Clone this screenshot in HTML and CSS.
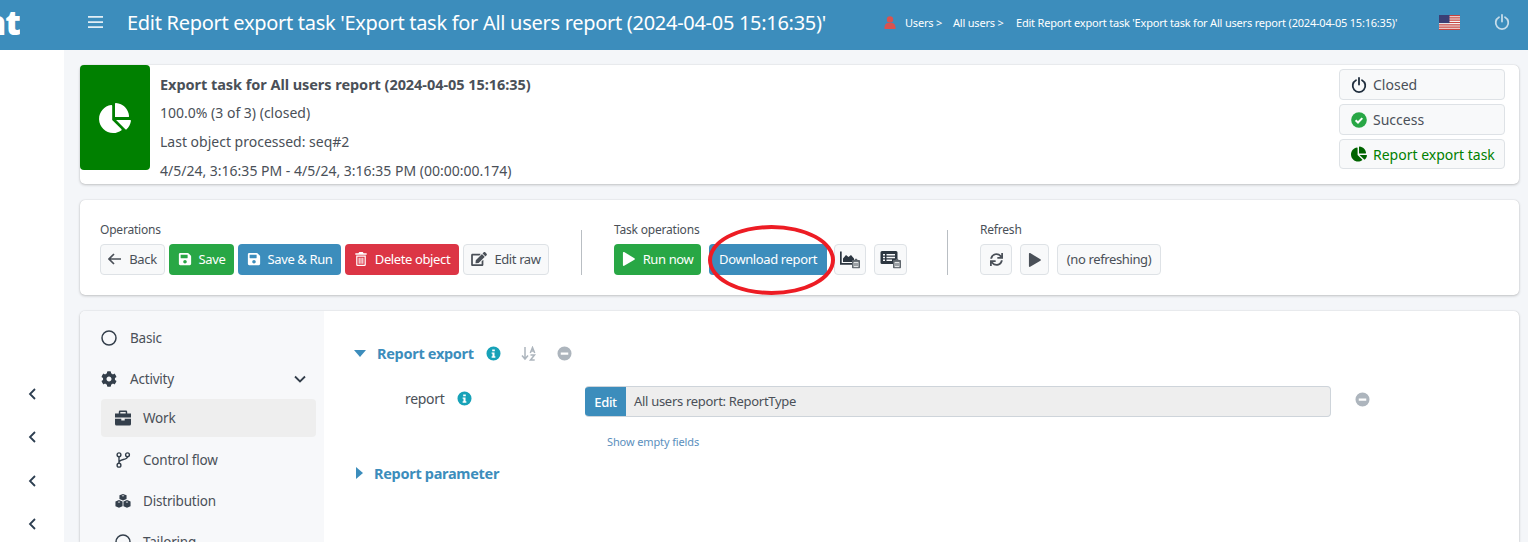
FILE: index.html
```html
<!DOCTYPE html>
<html lang="en">
<head>
<meta charset="utf-8">
<title>Edit Report export task</title>
<link rel="stylesheet" href="styles.css">
</head>
<body>
<svg class="defs" width="0" height="0" aria-hidden="true">
  <symbol id="pie" viewBox="0 0 544 512"><path d="M527.79 288H290.5l158.03 158.03c6.04 6.04 15.98 6.53 22.19.68 38.7-36.46 65.32-85.61 73.13-140.86 1.34-9.46-6.51-17.85-16.06-17.85zm-15.83-64.8C503.72 103.74 408.26 8.28 288.8.04 279.68-.59 272 7.1 272 16.24V240h223.77c9.14 0 16.82-7.68 16.19-16.8zM224 288V50.71c0-9.55-8.39-17.4-17.84-16.06C86.99 51.49-4.1 155.6.14 280.37 4.5 408.51 114.83 513.59 243.03 511.98c50.4-.63 96.97-16.87 135.26-44.03 7.9-5.6 8.42-17.23 1.57-24.08L224 288z"/></symbol>
  <symbol id="save" viewBox="0 0 448 512"><path d="M433.941 129.941l-83.882-83.882A48 48 0 0 0 316.118 32H48C21.49 32 0 53.49 0 80v352c0 26.51 21.49 48 48 48h352c26.51 0 48-21.49 48-48V163.882a48 48 0 0 0-14.059-33.941zM224 416c-35.346 0-64-28.654-64-64 0-35.346 28.654-64 64-64s64 28.654 64 64c0 35.346-28.654 64-64 64zm96-304.52V212c0 6.627-5.373 12-12 12H76c-6.627 0-12-5.373-12-12V108c0-6.627 5.373-12 12-12h228.52c3.183 0 6.235 1.264 8.485 3.515l3.48 3.48A11.996 11.996 0 0 1 320 111.48z"/></symbol>
  <symbol id="edit" viewBox="0 0 576 512"><path d="M402.6 83.2l90.2 90.2c3.8 3.8 3.8 10 0 13.8L274.4 405.6l-92.8 10.3c-12.4 1.4-22.9-9.1-21.5-21.5l10.3-92.8L388.8 83.2c3.8-3.8 10-3.8 13.8 0zm162-22.9l-48.8-48.8c-15.2-15.2-39.9-15.2-55.2 0l-35.4 35.4c-3.8 3.8-3.8 10 0 13.8l90.2 90.2c3.8 3.8 10 3.8 13.8 0l35.4-35.4c15.2-15.3 15.2-40 0-55.2zM384 346.2V448H64V128h229.8c3.2 0 6.2-1.3 8.5-3.5l40-40c7.6-7.6 2.2-20.5-8.5-20.5H48C21.5 64 0 85.5 0 112v352c0 26.5 21.5 48 48 48h352c26.5 0 48-21.5 48-48V306.2c0-10.7-12.9-16-20.5-8.5l-40 40c-2.2 2.3-3.5 5.3-3.5 8.5z"/></symbol>
  <symbol id="sync" viewBox="0 0 512 512"><path d="M440.65 12.57l4 82.77A247.16 247.16 0 0 0 255.83 8C134.73 8 33.91 94.92 12.29 209.82A12 12 0 0 0 24.09 224h49.05a12 12 0 0 0 11.67-9.26 175.91 175.91 0 0 1 317-56.94l-101.46-4.86a12 12 0 0 0-12.57 12v47.41a12 12 0 0 0 12 12H500a12 12 0 0 0 12-12V12a12 12 0 0 0-12-12h-47.37a12 12 0 0 0-11.98 12.57zM255.83 432a175.61 175.61 0 0 1-146-77.8l101.8 4.87a12 12 0 0 0 12.57-12v-47.4a12 12 0 0 0-12-12H12a12 12 0 0 0-12 12V500a12 12 0 0 0 12 12h47.35a12 12 0 0 0 12-12.6l-4.15-82.57A247.17 247.17 0 0 0 255.83 504c121.11 0 221.93-86.92 243.55-201.82a12 12 0 0 0-11.8-14.18h-49.05a12 12 0 0 0-11.67 9.26A175.86 175.86 0 0 1 255.83 432z"/></symbol>
  <symbol id="cog" viewBox="0 0 512 512"><path d="M487.4 315.7l-42.6-24.6c4.3-23.2 4.3-47 0-70.2l42.6-24.6c4.9-2.8 7.1-8.6 5.5-14-11.1-35.6-30-67.8-54.7-94.6-3.8-4.1-10-5.1-14.8-2.3L380.8 110c-17.9-15.4-38.5-27.3-60.8-35.1V25.8c0-5.6-3.9-10.5-9.4-11.7-36.7-8.2-74.3-7.8-109.2 0-5.5 1.2-9.4 6.1-9.4 11.7V75c-22.2 7.9-42.8 19.8-60.8 35.1L88.7 85.5c-4.9-2.8-11-1.9-14.8 2.3-24.7 26.7-43.6 58.9-54.7 94.6-1.7 5.4.6 11.2 5.5 14L67.3 221c-4.3 23.2-4.3 47 0 70.2l-42.6 24.6c-4.9 2.8-7.1 8.6-5.5 14 11.1 35.6 30 67.8 54.7 94.6 3.8 4.1 10 5.1 14.8 2.3l42.6-24.6c17.9 15.4 38.5 27.3 60.8 35.1v49.2c0 5.6 3.9 10.5 9.4 11.7 36.7 8.2 74.3 7.8 109.2 0 5.5-1.2 9.4-6.1 9.4-11.7v-49.2c22.2-7.9 42.8-19.8 60.8-35.1l42.6 24.6c4.9 2.8 11 1.9 14.8-2.3 24.7-26.7 43.6-58.9 54.7-94.6 1.5-5.5-.7-11.3-5.6-14.1zM256 336c-44.1 0-80-35.9-80-80s35.9-80 80-80 80 35.9 80 80-35.9 80-80 80z"/></symbol>
  <symbol id="info" viewBox="0 0 16 16"><path fill-rule="evenodd" d="M8 .5a7.5 7.5 0 1 1 0 15 7.5 7.5 0 0 1 0-15zM6.6 3.600v2h2.800v-2zM6 6.800v1.500h.9v2.600H6v1.500h4v-1.500h-.9V6.800z"/></symbol>
  <symbol id="minus" viewBox="0 0 16 16"><path fill-rule="evenodd" d="M8 .5a7.500 7.500 0 1 1 0 15 7.500 7.500 0 0 1 0-15zM4 6.800v2.400h8V6.800z"/></symbol>
  <symbol id="power" viewBox="0 0 16 16"><g fill="none" stroke="currentColor" stroke-width="1.800" stroke-linecap="round"><path d="M5 3.200a6.300 6.300 0 1 0 6 0"/><path d="M8 1v6.500"/></g></symbol>
  <symbol id="clip" viewBox="0 0 10 12"><path d="M3.200 1.500C3.200.6 3.900 0 5 0s1.800.6 1.800 1.500H9a1 1 0 0 1 1 1V11a1 1 0 0 1-1 1H1a1 1 0 0 1-1-1V2.500a1 1 0 0 1 1-1z" fill="#5f666d"/><path fill="#f8f9fa" d="M2 4h6v6.500H2z"/><path fill="#5f666d" d="M3 5h1v4.500H3zM4.500 5h1v4.500h-1zM6 5h1v4.500H6z"/></symbol>
</svg>

<header class="topbar">
  <div class="logo"><span>nt</span></div>
  <svg class="burger" viewBox="0 0 15 12"><path d="M0 0h15v1.700H0zM0 5.200h15v1.700H0zM0 10.300h15V12H0z"/></svg>
  <h1 class="page-title">Edit Report export task 'Export task for All users report (2024-04-05 15:16:35)'</h1>
  <nav class="crumbs">
    <svg class="crumb-user" viewBox="0 0 12 13"><circle cx="6" cy="3.400" r="3.200"/><path d="M.5 13v-1.800C.5 8.600 2.500 7 4 7h4c1.500 0 3.500 1.600 3.500 4.200V13z"/></svg>
    <span class="crumb crumb-users">Users &gt;</span>
    <span class="crumb crumb-all">All users &gt;</span>
    <span class="crumb">Edit Report export task 'Export task for All users report (2024-04-05 15:16:35)'</span>
  </nav>
  <svg class="flag" viewBox="0 0 21 15"><path fill="#f5f5f5" d="M0 0h21v15H0z"/><path fill="#c8443f" d="M0 0h21v1.200H0zM0 2.300h21v1.200H0zM0 4.600h21v1.200H0zM0 6.900h21v1.200H0zM0 9.200h21v1.200H0zM0 11.500h21v1.200H0zM0 13.800h21V15H0z"/><path fill="#3b3f75" d="M0 0h10.500v8.100H0z"/></svg>
  <svg class="power-top"><use href="#power"/></svg>
</header>

<div class="layout">
  <aside class="rail">
    <svg class="rail-chev" viewBox="0 0 8 12"><path d="M7 1 2 6l5 5"/></svg>
    <svg class="rail-chev" viewBox="0 0 8 12"><path d="M7 1 2 6l5 5"/></svg>
    <svg class="rail-chev" viewBox="0 0 8 12"><path d="M7 1 2 6l5 5"/></svg>
    <svg class="rail-chev" viewBox="0 0 8 12"><path d="M7 1 2 6l5 5"/></svg>
  </aside>

  <main class="content">
    <section class="card summary">
      <div class="thumb"><svg class="thumb-icon"><use href="#pie"/></svg></div>
      <div class="details">
        <div class="detail detail-title">Export task for All users report (2024-04-05 15:16:35)</div>
        <div class="detail">100.0% (3 of 3) (closed)</div>
        <div class="detail">Last object processed: seq#2</div>
        <div class="detail">4/5/24, 3:16:35 PM - 4/5/24, 3:16:35 PM (00:00:00.174)</div>
      </div>
      <div class="statuses">
        <div class="status"><svg class="status-icon navy"><use href="#power"/></svg>Closed</div>
        <div class="status"><svg class="status-icon" viewBox="0 0 16 16"><circle class="ok" cx="8" cy="8" r="7.800"/><path class="ok-check" d="m4.600 8.200 2.400 2.300 4.300-4.400"/></svg>Success</div>
        <div class="status status-green"><svg class="status-icon dark-green"><use href="#pie"/></svg>Report export task</div>
      </div>
    </section>

    <section class="card toolbar">
      <div class="tool-group">
        <div class="group-label">Operations</div>
        <div class="btn-row">
          <button class="btn btn-light w-back"><svg class="ico" viewBox="0 0 14 12"><path class="line" d="M13 6H1.500M6 1 1 6l5 5"/></svg>Back</button>
          <button class="btn btn-green w-save"><svg class="ico"><use href="#save"/></svg>Save</button>
          <button class="btn btn-blue w-saverun"><svg class="ico"><use href="#save"/></svg>Save &amp; Run</button>
          <button class="btn btn-red w-delete"><svg class="ico" viewBox="0 0 14 16"><path d="M5 0h4l1 1.500h3.500v1.600H.5V1.500H4zM1.500 4h11v10.500a1.500 1.500 0 0 1-1.500 1.500H3a1.500 1.500 0 0 1-1.500-1.500zm1.400 1.400v9.200h8.200V5.400zM4.300 6.500h1.200v7H4.300zM6.400 6.500h1.200v7H6.400zM8.500 6.500h1.200v7H8.500z" fill-rule="evenodd"/></svg>Delete object</button>
          <button class="btn btn-light w-raw"><svg class="ico wide"><use href="#edit"/></svg>Edit raw</button>
        </div>
      </div>
      <div class="divider"></div>
      <div class="tool-group">
        <div class="group-label">Task operations</div>
        <div class="btn-row btn-row-wide">
          <button class="btn btn-green w-run"><svg class="ico" viewBox="0 0 13 15"><path d="M0 .8C0 .1.700-.2 1.300.1l11 6.500c.6.400.6 1.300 0 1.700l-11 6.500C.7 15.200 0 14.900 0 14.100z"/></svg>Run now</button>
          <span class="highlighted">
            <button class="btn btn-blue btn-download">Download report</button>
            <span class="ring"></span>
          </span>
          <button class="btn btn-light btn-icon btn-icon-first"><svg class="tool-svg" viewBox="0 0 22 20"><path d="M1 1.500h1.700V13H16v1.700H1z"/><path d="M4 12V8.500L7 5l2.500 2L12 5l3 3.500V12z"/><use href="#clip" x="13" y="8" width="8" height="11"/></svg></button>
          <button class="btn btn-light btn-icon"><svg class="tool-svg" viewBox="0 0 22 20"><path fill-rule="evenodd" d="M2 1h14a1.500 1.500 0 0 1 1.500 1.500v10A1.500 1.500 0 0 1 16 14H2a1.500 1.500 0 0 1-1.500-1.500v-10A1.500 1.500 0 0 1 2 1zm1 3v1.500h2V4zm3.500 0v1.500H15V4zM3 6.800v1.500h2V6.800zm3.500 0v1.500H15V6.800zM3 9.600v1.500h2V9.600zm3.500 0v1.500H12V9.600z"/><use href="#clip" x="13" y="8" width="8" height="11"/></svg></button>
        </div>
      </div>
      <div class="divider divider-wide"></div>
      <div class="tool-group">
        <div class="group-label">Refresh</div>
        <div class="btn-row btn-row-wide">
          <button class="btn btn-light btn-refresh"><svg class="ico sm"><use href="#sync"/></svg></button>
          <button class="btn btn-light btn-play"><svg class="ico" viewBox="0 0 13 15"><path d="M0 .8C0 .1.700-.2 1.300.1l11 6.500c.6.400.6 1.300 0 1.700l-11 6.500C.7 15.200 0 14.900 0 14.100z"/></svg></button>
          <button class="btn btn-light w-norefresh">(no refreshing)</button>
        </div>
      </div>
    </section>

    <section class="card workspace">
      <nav class="side">
        <a class="side-item"><svg class="side-icon" viewBox="0 0 16 16"><circle class="ring-ico" cx="8" cy="8" r="7"/></svg>Basic</a>
        <a class="side-item side-parent"><svg class="side-icon"><use href="#cog"/></svg>Activity<svg class="side-chev" viewBox="0 0 12 8"><path d="m1 1.500 5 5 5-5"/></svg></a>
        <a class="side-item side-child side-active"><svg class="side-icon" viewBox="0 0 16 15"><path d="M5 0h6a1.200 1.200 0 0 1 1.200 1.200V3H16v4H0V3h3.800V1.200A1.200 1.200 0 0 1 5 0zm.300 1.500V3h5.400V1.500zM0 8.200h6.300V10h3.400V8.200H16v5.300a1.500 1.500 0 0 1-1.500 1.500h-13A1.500 1.500 0 0 1 0 13.500z"/></svg>Work</a>
        <a class="side-item side-child"><svg class="side-icon branch" viewBox="0 0 16 16"><circle cx="4" cy="2.800" r="1.900"/><circle cx="4" cy="13.200" r="1.900"/><circle cx="12.500" cy="2.800" r="1.900"/><path d="M4 4.700v6.600M12.500 4.700c0 3.800-8.500 1.800-8.500 6"/></svg>Control flow</a>
        <a class="side-item side-child"><svg class="side-icon" viewBox="0 0 18 16"><path fill-rule="evenodd" d="m9 0 4 1.600v4.200L9 7.400 5 5.800V1.600zM7.400 2.200 9 2.900l1.600-.7L9 1.600zM4.500 7 8.500 8.600v5.400l-4 1.600-4-1.600V8.600zM2.900 9.200l1.600.7 1.600-.7-1.600-.6zM13.500 7l4 1.600v5.400l-4 1.600-4-1.600V8.600zM11.900 9.200l1.600.7 1.600-.7-1.600-.6z"/></svg>Distribution</a>
        <a class="side-item side-child"><svg class="side-icon" viewBox="0 0 16 16"><circle class="ring-ico" cx="8" cy="8" r="7"/></svg>Tailoring</a>
      </nav>
      <div class="form">
        <div class="form-head">
          <span class="tri-down"></span>
          <span class="form-title">Report export</span>
          <svg class="dot teal title-info"><use href="#info"/></svg>
          <svg class="sort" viewBox="0 0 16 15"><path class="sort-arrow" d="M4 1v12M1 9.500 4 13l3-3.500M9.300 7l2.200-5.500L13.700 7M10.200 5h2.600M9.500 9h4l-4 5h4.200"/></svg>
          <svg class="dot grey"><use href="#minus"/></svg>
        </div>
        <div class="field">
          <div class="field-label">report<svg class="dot teal"><use href="#info"/></svg></div>
          <div class="input-group">
            <button class="input-btn">Edit</button>
            <div class="input-value">All users report: ReportType</div>
          </div>
          <svg class="dot grey field-remove"><use href="#minus"/></svg>
        </div>
        <a class="show-empty">Show empty fields</a>
        <div class="form-head form-head-second">
          <span class="tri-right"></span>
          <span class="form-title">Report parameter</span>
        </div>
      </div>
    </section>
  </main>
</div>
</body>
</html>
```
FILE: styles.css
```css
* { box-sizing: border-box; }
html, body { margin: 0; height: 542px; overflow: hidden; }
body { font-family: "Noto Sans", "Open Sans", sans-serif; font-size: 13px; letter-spacing: -.3px; color: #4a5058; background: #fff; }
.defs { position: absolute; }
svg { fill: currentColor; flex: none; display: block; }

.topbar { height: 50px; padding-bottom: 6px; background: #3c8dbc; color: #fff; display: flex; align-items: center; }
.logo { width: 20px; overflow: hidden; display: flex; justify-content: flex-end; font-weight: 900; font-size: 34px; line-height: 40px; letter-spacing: -1px; }
.burger { width: 15px; height: 12px; margin-left: 68px; opacity: .85; }
.page-title { margin: 0 0 0 24px; font-size: 20px; font-weight: 400; white-space: nowrap; width: 757px; letter-spacing: -.29px; }
.crumbs { display: flex; align-items: center; font-size: 11px; width: 555px; letter-spacing: -.2px; }
.crumb-user { width: 12px; height: 13px; color: #d9534f; margin-right: 9px; }
.crumb { white-space: nowrap; }
.crumb-users { width: 48px; }
.crumb-all { width: 63px; }
.flag { width: 21px; height: 15px; }
.power-top { width: 16px; height: 16px; margin-left: 34px; color: #c5dcea; }

.layout { display: flex; height: 492px; }
.rail { width: 64px; background: #fff; padding: 338px 0 0 28px; display: flex; flex-direction: column; gap: 31.400px; }
.rail-chev { width: 8px; height: 12px; }
.rail-chev path { fill: none; stroke: #2c3e50; stroke-width: 1.800; }

.content { flex: 1; background: #f4f6f9; padding: 15px 9px 0 16px; display: flex; flex-direction: column; gap: 16px; min-width: 0; }
.card { background: #fff; border-radius: 5px; box-shadow: 0 0 1px rgba(0,0,0,.2), 0 1px 3px rgba(0,0,0,.2); }

.summary { height: 119px; display: flex; flex: none; }
.thumb { width: 70px; height: 105px; background: #008000; border-radius: 4px; display: flex; align-items: center; justify-content: center; }
.thumb-icon { width: 32px; height: 30px; color: #fff; }
.details { flex: 1; padding: 5px 0 0 10px; }
.detail { height: 29px; line-height: 28px; font-size: 14px; letter-spacing: 0; }
.detail-title { font-weight: 700; font-size: 14.500px; letter-spacing: -.05px; }
.statuses { width: 166px; margin: 4px 14px 0 0; display: flex; flex-direction: column; gap: 4px; }
.status { height: 31px; background: #f8f9fa; border: 1px solid #dee2e6; border-radius: 4px; display: flex; align-items: center; padding-left: 11px; gap: 6px; font-size: 14px; white-space: nowrap; letter-spacing: 0; }
.status-icon { width: 16px; height: 16px; }
.status-green { color: #008000; height: 30px; }
.navy { color: #1f2d3d; }
.dark-green { color: #006400; }
.ok { fill: #28a745; }
.ok-check { fill: none; stroke: #fff; stroke-width: 2; }

.toolbar { height: 95px; flex: none; display: flex; padding: 20px 0 0 20px; }
.group-label { height: 24px; line-height: 20px; font-size: 12px; letter-spacing: -.2px; }
.btn-row { display: flex; gap: 4px; }
.btn-row-wide { gap: 8px; }
.divider { width: 1px; height: 45px; background: #b9bec3; margin: 10px 32px 0; }
.divider-wide { margin-left: 40px; }
.btn { height: 31px; border-radius: 4px; border: 1px solid transparent; font: inherit; letter-spacing: -.38px; display: flex; align-items: center; justify-content: center; gap: 7px; padding: 0 0 2px; white-space: nowrap; }
.btn-light { background: #f8f9fa; border-color: #dee2e6; color: #4a5058; }
.btn-green { background: #28a745; color: #fff; }
.btn-blue { background: #3c8dbc; color: #fff; }
.btn-red { background: #dc3545; color: #fff; }
.w-back { width: 65px; }
.w-save { width: 65px; }
.w-saverun { width: 103px; }
.w-delete { width: 114px; }
.w-raw { width: 86px; }
.w-run { width: 87px; }
.w-norefresh { width: 104px; }
.ico { width: 14px; height: 14px; }
.ico.wide { width: 16px; }
.ico.sm { width: 13px; height: 13px; }
.line { fill: none; stroke: currentColor; stroke-width: 1.700; }
.btn-icon { width: 33px; padding: 0; }
.btn-icon-first { width: 32px; }
.btn-refresh { width: 32px; padding: 0; }
.btn-play { width: 29px; padding: 0; }
.tool-svg { width: 22px; height: 20px; color: #2c3640; }
.highlighted { position: relative; display: block; margin-right: -1px; }
.btn-download { width: 118px; }
.ring { position: absolute; left: -1px; top: -19px; width: 127px; height: 70px; border: 4px solid #ed1c24; border-radius: 50%; pointer-events: none; }

.workspace { flex: 1; display: flex; min-height: 0; overflow: hidden; border-radius: 5px 5px 0 0; }
.side { width: 244px; flex: none; background: #f7f8fa; padding: 8px 8px 0 21px; display: flex; flex-direction: column; gap: 3px; }
.side-item { height: 38px; flex: none; display: flex; align-items: center; gap: 13px; border-radius: 4px; font-size: 13.500px; letter-spacing: -.2px; color: #4a5058; }
.side-parent { margin-bottom: -2px; }
.side-icon { width: 16px; height: 16px; color: #343f4b; }
.side-child { padding-left: 14px; gap: 12px; }
.side-active { background: #eee; margin-bottom: 1px; }
.ring-ico { fill: none; stroke: #343f4b; stroke-width: 1.500; }
.branch { fill: none; stroke: #343f4b; stroke-width: 1.400; }
.side-chev { width: 12px; height: 8px; margin-left: auto; margin-right: 10px; }
.side-chev path { fill: none; stroke: #343f4b; stroke-width: 1.800; }

.form { flex: 1; padding: 31px 0 0 30px; min-width: 0; }
.form-head { display: flex; align-items: center; height: 22px; }
.form-title { font-size: 14.500px; font-weight: 700; color: #3c8dbc; white-space: nowrap; letter-spacing: -.3px; }
.tri-down { width: 0; height: 0; border-left: 6px solid transparent; border-right: 6px solid transparent; border-top: 7px solid #3c8dbc; margin-right: 11px; }
.tri-right { width: 0; height: 0; border-top: 6px solid transparent; border-bottom: 6px solid transparent; border-left: 7px solid #3c8dbc; margin: 0 11px 0 2px; }
.dot { width: 15px; height: 15px; }
.teal { color: #17a2b8; }
.grey { color: #adb5bd; }
.title-info { margin-left: 12px; }
.sort { width: 16px; height: 15px; margin: 0 20px; color: #adb5bd; }
.sort-arrow { fill: none; stroke: currentColor; stroke-width: 1.500; }
.field { display: flex; align-items: center; margin-top: 22px; }
.field-label { width: 231px; flex: none; padding-left: 51px; display: flex; align-items: center; gap: 12px; font-size: 14px; margin-top: -7px; }
.input-group { width: 746px; height: 31px; flex: none; display: flex; border-radius: 4px; overflow: hidden; border: 1px solid #ced4da; border-left: 0; background: #eee; }
.input-btn { width: 41px; border: 0; background: #3c8dbc; color: #fff; font: inherit; letter-spacing: inherit; font-weight: 500; padding: 0; margin: -1px 0; }
.input-value { padding-left: 8px; line-height: 29px; }
.field-remove { margin: -4px 0 0 24px; }
.show-empty { display: block; margin: 17px 0 0 253px; font-size: 11px; line-height: 16px; letter-spacing: -.12px; color: #5b8fbd; }
.form-head-second { margin-top: 12px; }
```
